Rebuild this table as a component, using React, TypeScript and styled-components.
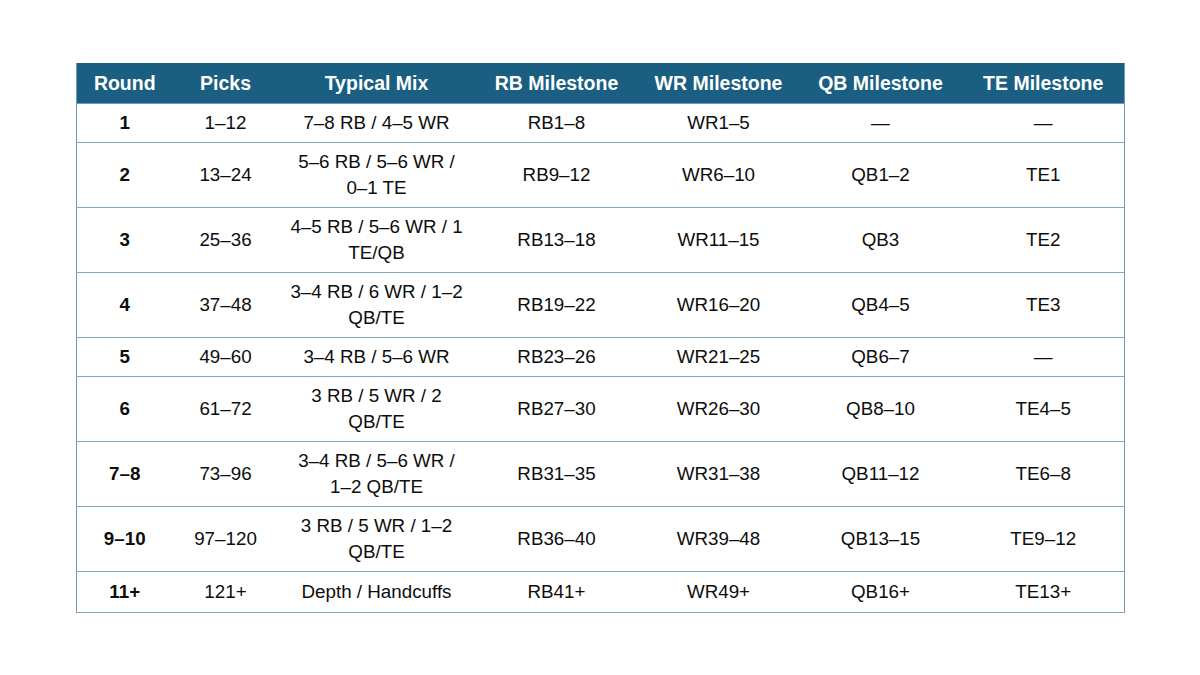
import React from 'react';
import styled, { createGlobalStyle } from 'styled-components';

const GlobalStyle = createGlobalStyle`
  html, body {
    margin: 0;
    padding: 0;
    background: #ffffff;
  }
  body {
    font-family: "Liberation Sans", Arial, sans-serif;
    color: #111111;
  }
`;

const Page = styled.div`
  width: 1200px;
  height: 675px;
  padding: 63px 76px 0;
  box-sizing: border-box;
  background: #ffffff;
`;

const Table = styled.table`
  width: 1048px;
  border-collapse: collapse;
  table-layout: fixed;
  border-left: 1px solid #6f9bb9;
  border-right: 1px solid #6f9bb9;
`;

const HeadRow = styled.tr`
  background: #1a5f82;
`;

const HeadCell = styled.th`
  height: 40px;
  padding: 0 4px;
  box-sizing: border-box;
  color: #ffffff;
  font-family: "Liberation Sans", Arial, sans-serif;
  font-weight: 700;
  font-size: 19.5px;
  line-height: 40px;
  text-align: center;
  white-space: nowrap;
  border-bottom: 1px solid #6f9bb9;
`;

const BodyRow = styled.tr`
  &:last-child td {
    padding-top: 7px;
    padding-bottom: 7px;
  }
`;

const Cell = styled.td<{ $bold?: boolean }>`
  padding: 6px 6px;
  border-bottom: 1px solid #7fa7c2;
  font-size: 18.8px;
  line-height: 26px;
  font-weight: ${(p) => (p.$bold ? 700 : 400)};
  color: #0d0d0d;
  text-align: center;
  vertical-align: middle;
  white-space: nowrap;
`;

const Line = styled.span`
  display: block;
`;

const columns = [
  { label: 'Round', width: 96 },
  { label: 'Picks', width: 106 },
  { label: 'Typical Mix', width: 196 },
  { label: 'RB Milestone', width: 164 },
  { label: 'WR Milestone', width: 160 },
  { label: 'QB Milestone', width: 164 },
  { label: 'TE Milestone', width: 162 },
];

const rows = [
  { round: '1', picks: '1–12', mix: ['7–8 RB / 4–5 WR'], rb: 'RB1–8', wr: 'WR1–5', qb: '—', te: '—' },
  { round: '2', picks: '13–24', mix: ['5–6 RB / 5–6 WR /', '0–1 TE'], rb: 'RB9–12', wr: 'WR6–10', qb: 'QB1–2', te: 'TE1' },
  { round: '3', picks: '25–36', mix: ['4–5 RB / 5–6 WR / 1', 'TE/QB'], rb: 'RB13–18', wr: 'WR11–15', qb: 'QB3', te: 'TE2' },
  { round: '4', picks: '37–48', mix: ['3–4 RB / 6 WR / 1–2', 'QB/TE'], rb: 'RB19–22', wr: 'WR16–20', qb: 'QB4–5', te: 'TE3' },
  { round: '5', picks: '49–60', mix: ['3–4 RB / 5–6 WR'], rb: 'RB23–26', wr: 'WR21–25', qb: 'QB6–7', te: '—' },
  { round: '6', picks: '61–72', mix: ['3 RB / 5 WR / 2', 'QB/TE'], rb: 'RB27–30', wr: 'WR26–30', qb: 'QB8–10', te: 'TE4–5' },
  { round: '7–8', picks: '73–96', mix: ['3–4 RB / 5–6 WR /', '1–2 QB/TE'], rb: 'RB31–35', wr: 'WR31–38', qb: 'QB11–12', te: 'TE6–8' },
  { round: '9–10', picks: '97–120', mix: ['3 RB / 5 WR / 1–2', 'QB/TE'], rb: 'RB36–40', wr: 'WR39–48', qb: 'QB13–15', te: 'TE9–12' },
  { round: '11+', picks: '121+', mix: ['Depth / Handcuffs'], rb: 'RB41+', wr: 'WR49+', qb: 'QB16+', te: 'TE13+' },
];

const App = () => {
  return (
    <Page>
      <GlobalStyle />
      <Table>
        <colgroup>
          {columns.map((c) => (
            <col key={c.label} style={{ width: c.width }} />
          ))}
        </colgroup>
        <thead>
          <HeadRow>
            {columns.map((c) => (
              <HeadCell key={c.label}>{c.label}</HeadCell>
            ))}
          </HeadRow>
        </thead>
        <tbody>
          {rows.map((r) => (
            <BodyRow key={r.round}>
              <Cell $bold>{r.round}</Cell>
              <Cell>{r.picks}</Cell>
              <Cell>
                {r.mix.map((line) => (
                  <Line key={line}>{line}</Line>
                ))}
              </Cell>
              <Cell>{r.rb}</Cell>
              <Cell>{r.wr}</Cell>
              <Cell>{r.qb}</Cell>
              <Cell>{r.te}</Cell>
            </BodyRow>
          ))}
        </tbody>
      </Table>
    </Page>
  );
};

export default App;
